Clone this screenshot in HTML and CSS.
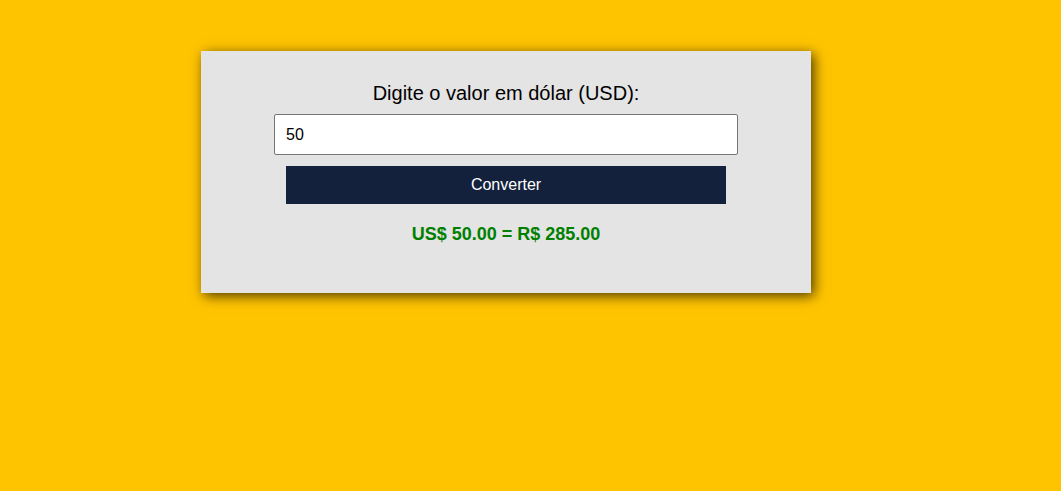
FILE: index.html
```html
<!DOCTYPE html>
<html lang="pt-BR">
<head>
<meta charset="utf-8">
<title>Conversor</title>
<link rel="stylesheet" href="styles.css">
</head>
<body>
<main class="card">
  <label class="label" for="valor">Digite o valor em dólar (USD):</label>
  <input class="input" id="valor" type="number" value="50">
  <button class="btn" type="button">Converter</button>
  <p class="result">US$ 50.00 = R$ 285.00</p>
</main>
</body>
</html>
```
FILE: styles.css
```css
html, body {
  margin: 0;
  padding: 0;
}
body {
  background: #ffc400;
  font-family: "Liberation Sans", Arial, sans-serif;
  min-height: 491px;
  padding-top: 51px;
  box-sizing: border-box;
}
.card {
  width: 610px;
  height: 242px;
  box-sizing: border-box;
  margin-left: 201px;
  background: #e4e4e4;
  box-shadow: 3px 3px 12px rgba(0, 0, 0, 0.7);
  display: flex;
  flex-direction: column;
  align-items: center;
  padding-top: 31px;
}
.label {
  font-size: 20px;
  line-height: 23px;
  color: #000;
}
.input {
  margin-top: 9px;
  width: 464px;
  height: 41px;
  box-sizing: border-box;
  border: 1px solid #767676;
  border-radius: 2px;
  padding: 0 11px;
  font-family: "Liberation Sans", Arial, sans-serif;
  font-size: 16px;
  background: #fff;
  color: #000;
  -moz-appearance: textfield;
}
.input::-webkit-outer-spin-button,
.input::-webkit-inner-spin-button {
  -webkit-appearance: none;
  margin: 0;
}
.btn {
  margin-top: 11px;
  width: 440px;
  height: 38px;
  border: none;
  background: #14213d;
  color: #fff;
  font-family: "Liberation Sans", Arial, sans-serif;
  font-size: 16px;
  padding: 0;
}
.result {
  margin: 20px 0 0;
  font-size: 18px;
  line-height: 21px;
  font-weight: bold;
  color: #008000;
}
```
